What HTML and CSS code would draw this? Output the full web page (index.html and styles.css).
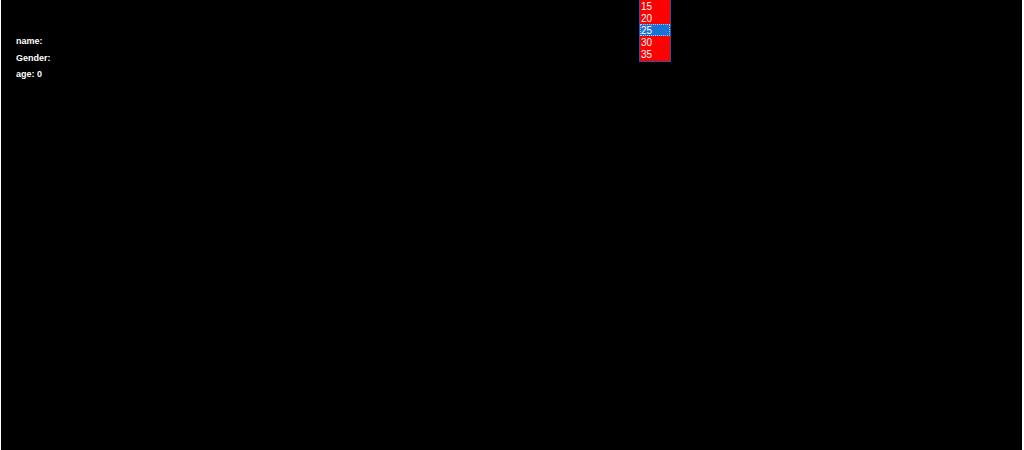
FILE: index.html
```html
<!DOCTYPE html>
<html>
<head>
<meta charset="utf-8">
<link rel="stylesheet" href="styles.css">
</head>
<body>
<div class="app">
  <div class="info">
    <div class="line">name:</div>
    <div class="line">Gender:</div>
    <div class="line">age: 0</div>
  </div>
  <ul class="listbox">
    <li class="opt">15</li>
    <li class="opt">20</li>
    <li class="opt selected">25</li>
    <li class="opt">30</li>
    <li class="opt">35</li>
  </ul>
</div>
</body>
</html>
```
FILE: styles.css
```css
html, body {
  margin: 0;
  padding: 0;
  background: #ffffff;
  height: 450px;
  overflow: hidden;
}
.app {
  position: relative;
  margin-left: 1px;
  width: 1021px;
  height: 450px;
  background: #000000;
  color: #ffffff;
  font-family: "Liberation Sans", Arial, sans-serif;
}
.info {
  padding: 33px 0 0 15px;
  display: flex;
  flex-direction: column;
}
.line {
  font-size: 9px;
  font-weight: bold;
  line-height: 16.5px;
  height: 16.5px;
}
.listbox {
  position: absolute;
  left: 638px;
  top: -1px;
  width: 30px;
  margin: 0;
  padding: 0 0 1px 0;
  list-style: none;
  background: #ff0000;
  border: 1px solid #3a4c9e;
}
.opt {
  height: 12px;
  line-height: 10px;
  padding-top: 2px;
  font-size: 10px;
  padding-left: 1px;
  color: #ffffff;
  box-sizing: border-box;
}
.selected {
  background: #1a72d6;
  outline: 1px dotted #a8c4f0;
  outline-offset: -1px;
}
```
